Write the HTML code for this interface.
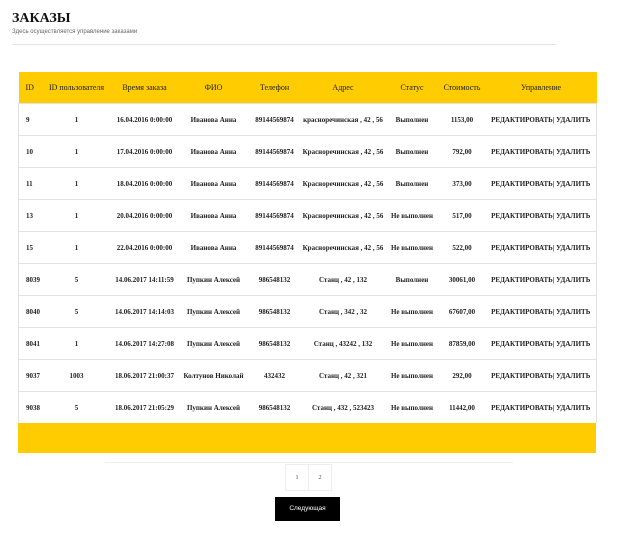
<!DOCTYPE html>
<html><head><meta charset="utf-8"><style>
body{margin:0;background:#fff;font-family:"Liberation Serif",serif;width:622px;height:537px;position:relative;overflow:hidden}
h1{position:absolute;left:12px;top:11px;margin:0;font-size:14px;font-weight:bold;color:#111}
.sub{position:absolute;left:12px;top:29px;font-family:"Liberation Sans",sans-serif;font-size:6px;color:#666}
.hr{position:absolute;left:12px;top:44px;width:545px;height:1px;background:#e6e6e6}
table{position:absolute;left:18px;top:72px;width:578px;border-collapse:collapse;table-layout:fixed}
th{background:#fecc00;height:31px;font-size:8px;font-weight:normal;color:#222;padding:0;text-align:center;white-space:nowrap}
td{height:31px;border-top:1px solid #e2e2e2;font-size:7px;font-weight:bold;color:#222;text-align:center;padding:0;white-space:nowrap;overflow:hidden;background:#fff}
tr td:first-child{border-left:1px solid #e2e2e2;text-align:left;padding-left:7px}
tr td:last-child{border-right:1px solid #e2e2e2}
th:first-child{text-align:left;padding-left:7px}
.foot{position:absolute;left:18px;top:423px;width:578px;height:30px;background:#fecc00}
.pl{position:absolute;left:105px;top:462px;width:408px;height:1px;background:#eee}
.pg{position:absolute;top:464px;width:22px;height:25px;border:1px solid #eee;font-size:6.5px;color:#555;text-align:center;line-height:25px}
.btn{position:absolute;left:275px;top:497px;width:65px;height:24px;background:#000;color:#fff;font-family:"Liberation Sans",sans-serif;font-size:6.5px;text-align:center;line-height:24px}
</style></head><body>
<h1>ЗАКАЗЫ</h1>
<div class="sub">Здесь осуществляется управление заказами</div>
<div class="hr"></div>
<table>
<colgroup><col style="width:24px"><col style="width:68px"><col style="width:68px"><col style="width:70px"><col style="width:52px"><col style="width:85px"><col style="width:53px"><col style="width:47px"><col style="width:111px"></colgroup>
<tr><th>ID</th><th>ID пользователя</th><th>Время заказа</th><th>ФИО</th><th>Телефон</th><th>Адрес</th><th>Статус</th><th>Стоимость</th><th>Управление</th></tr>
<tr><td>9</td><td>1</td><td>16.04.2016 0:00:00</td><td>Иванова Анна</td><td>89144569874</td><td>красноречинская , 42 , 56</td><td>Выполнен</td><td>1153,00</td><td>РЕДАКТИРОВАТЬ| УДАЛИТЬ</td></tr>
<tr><td>10</td><td>1</td><td>17.04.2016 0:00:00</td><td>Иванова Анна</td><td>89144569874</td><td>Красноречинская , 42 , 56</td><td>Выполнен</td><td>792,00</td><td>РЕДАКТИРОВАТЬ| УДАЛИТЬ</td></tr>
<tr><td>11</td><td>1</td><td>18.04.2016 0:00:00</td><td>Иванова Анна</td><td>89144569874</td><td>Красноречинская , 42 , 56</td><td>Выполнен</td><td>373,00</td><td>РЕДАКТИРОВАТЬ| УДАЛИТЬ</td></tr>
<tr><td>13</td><td>1</td><td>20.04.2016 0:00:00</td><td>Иванова Анна</td><td>89144569874</td><td>Красноречинская , 42 , 56</td><td>Не выполнен</td><td>517,00</td><td>РЕДАКТИРОВАТЬ| УДАЛИТЬ</td></tr>
<tr><td>15</td><td>1</td><td>22.04.2016 0:00:00</td><td>Иванова Анна</td><td>89144569874</td><td>Красноречинская , 42 , 56</td><td>Не выполнен</td><td>522,00</td><td>РЕДАКТИРОВАТЬ| УДАЛИТЬ</td></tr>
<tr><td>8039</td><td>5</td><td>14.06.2017 14:11:59</td><td>Пупкин Алексей</td><td>986548132</td><td>Станц , 42 , 132</td><td>Выполнен</td><td>30061,00</td><td>РЕДАКТИРОВАТЬ| УДАЛИТЬ</td></tr>
<tr><td>8040</td><td>5</td><td>14.06.2017 14:14:03</td><td>Пупкин Алексей</td><td>986548132</td><td>Станц , 342 , 32</td><td>Не выполнен</td><td>67607,00</td><td>РЕДАКТИРОВАТЬ| УДАЛИТЬ</td></tr>
<tr><td>8041</td><td>1</td><td>14.06.2017 14:27:08</td><td>Пупкин Алексей</td><td>986548132</td><td>Станц , 43242 , 132</td><td>Не выполнен</td><td>87859,00</td><td>РЕДАКТИРОВАТЬ| УДАЛИТЬ</td></tr>
<tr><td>9037</td><td>1003</td><td>18.06.2017 21:00:37</td><td>Колтунов Николай</td><td>432432</td><td>Станц , 42 , 321</td><td>Не выполнен</td><td>292,00</td><td>РЕДАКТИРОВАТЬ| УДАЛИТЬ</td></tr>
<tr><td>9038</td><td>5</td><td>18.06.2017 21:05:29</td><td>Пупкин Алексей</td><td>986548132</td><td>Станц , 432 , 523423</td><td>Не выполнен</td><td>11442,00</td><td>РЕДАКТИРОВАТЬ| УДАЛИТЬ</td></tr>
</table>
<div class="foot"></div>
<div class="pl"></div>
<div class="pg" style="left:285px">1</div>
<div class="pg" style="left:308px">2</div>
<div class="btn">Следующая</div>
</body></html>
